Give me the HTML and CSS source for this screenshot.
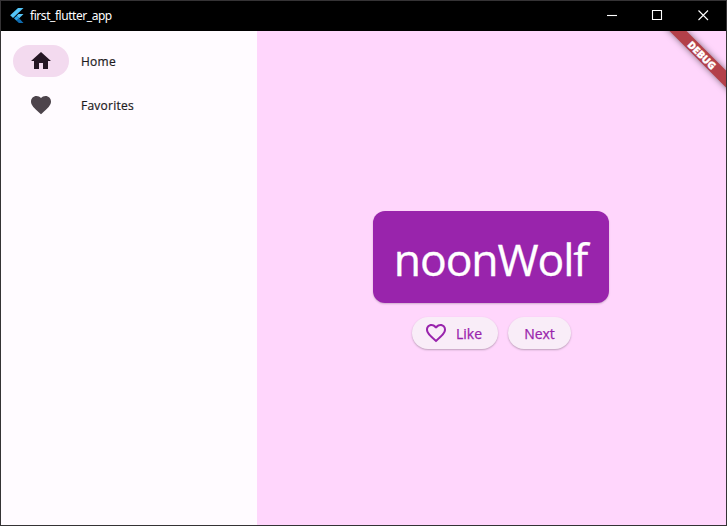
FILE: index.html
```
<!DOCTYPE html>
<html lang="en">
<head>
<meta charset="utf-8">
<title>first_flutter_app</title>
<link rel="stylesheet" href="styles.css">
</head>
<body>
<div class="window">
  <header class="titlebar">
    <svg class="logo" viewBox="0 0 16 16">
      <path d="M9 1h5.500L4 11 1.200 8.300z" fill="#54c5f8"/>
      <path d="M9.500 7h5l-4.300 4.200L7.500 9z" fill="#54c5f8"/>
      <path d="M5 11.200 7.500 8.900l2.700 2.300-2.700 2.500z" fill="#29a5ea"/>
      <path d="M7.500 13.700l2.700-2.500L14.500 16h-4.600z" fill="#0f6cb0"/>
    </svg>
    <span class="title">first_flutter_app</span>
    <div class="controls">
      <svg viewBox="0 0 46 30"><path d="M16 14.500h10"/></svg>
      <svg viewBox="0 0 46 30"><path d="M15.500 9.500h9v9h-9z"/></svg>
      <svg viewBox="0 0 46 30"><path d="M15.500 9.500l9.500 9.500M25 9.500l-9.500 9.500"/></svg>
    </div>
  </header>
  <div class="content">
    <nav class="rail">
      <a class="item selected">
        <span class="indicator"><svg viewBox="0 0 24 24"><path d="M10 20v-6h4v6h5v-8h3L12 3 2 12h3v8z"/></svg></span>
        <span class="label">Home</span>
      </a>
      <a class="item">
        <span class="indicator"><svg viewBox="0 0 24 24"><path d="M12 21.350l-1.450-1.320C5.400 15.360 2 12.280 2 8.500 2 5.420 4.420 3 7.500 3c1.740 0 3.410.81 4.500 2.090C13.090 3.810 14.760 3 16.500 3 19.580 3 22 5.420 22 8.500c0 3.780-3.400 6.860-8.550 11.540L12 21.350z"/></svg></span>
        <span class="label">Favorites</span>
      </a>
    </nav>
    <main class="page">
      <div class="card"><span class="word">noonWolf</span></div>
      <div class="actions">
        <button class="btn like">
          <svg viewBox="0 0 24 24"><path d="M16.500 3c-1.740 0-3.410.81-4.500 2.090C10.910 3.810 9.240 3 7.500 3 4.420 3 2 5.420 2 8.500c0 3.780 3.400 6.860 8.550 11.540L12 21.350l1.450-1.320C18.600 15.360 22 12.280 22 8.500 22 5.420 19.580 3 16.500 3zm-4.400 15.550l-.1.100-.1-.1C7.140 14.240 4 11.390 4 8.500 4 6.500 5.500 5 7.500 5c1.540 0 3.040.99 3.570 2.360h1.870C13.460 5.990 14.960 5 16.500 5c2 0 3.500 1.500 3.500 3.500 0 2.890-3.140 5.740-7.900 10.050z"/></svg>
          <span class="btn-label">Like</span>
        </button>
        <button class="btn next"><span class="btn-label">Next</span></button>
      </div>
      <div class="banner"><span>DEBUG</span></div>
    </main>
  </div>
</div>
</body>
</html>
```
FILE: styles.css
```
* { box-sizing: border-box; }
body { margin: 0; font-family: "Open Sans", "Noto Sans", sans-serif; }
.window {
  width: 727px;
  height: 526px;
  border: 1px solid #353335;
  display: flex;
  flex-direction: column;
  overflow: hidden;
}
.titlebar {
  height: 30px;
  flex: none;
  background: #000;
  color: #fff;
  display: flex;
  align-items: center;
  padding-left: 8px;
}
.logo { width: 16px; height: 16px; margin-top: -2px; }
.title {
  font-family: "Noto Sans", sans-serif;
  font-size: 12px;
  line-height: 16px;
  letter-spacing: -0.45px;
  margin-left: 5px;
  white-space: nowrap;
}
.controls { margin-left: auto; display: flex; margin-right: -3px; }
.controls svg {
  width: 46px;
  height: 30px;
  fill: none;
  stroke: #fff;
  stroke-width: 1.1;
}
.content { flex: 1; display: flex; min-height: 0; }
.rail {
  width: 256px;
  background: #fffbff;
  padding: 14px 12px;
  display: flex;
  flex-direction: column;
  gap: 12px;
}
.item { display: flex; align-items: center; height: 32px; color: #4d444c; }
.indicator {
  width: 56px;
  height: 32px;
  border-radius: 16px;
  display: flex;
  align-items: center;
  justify-content: center;
}
.indicator svg { width: 24px; height: 24px; fill: currentColor; }
.selected .indicator { background: #f3daef; color: #251624; }
.label {
  margin-left: 12px;
  font-size: 12px;
  line-height: 16px;
  letter-spacing: 0.25px;
  color: #1e1a1d;
  -webkit-text-stroke: 0.2px currentColor;
  margin-top: 2px;
}
.page {
  flex: 1;
  background: #ffd6fc;
  position: relative;
  overflow: hidden;
  display: flex;
  flex-direction: column;
  align-items: center;
  padding-top: 180px;
}
.card {
  width: 236px;
  height: 92px;
  margin-right: 1px;
  border-radius: 12px;
  background: #9924ac;
  box-shadow: 0 1px 2px rgba(0, 0, 0, 0.2);
  display: flex;
  align-items: center;
  justify-content: center;
}
.word {
  color: #fff;
  font-size: 44.500px;
  line-height: 52px;
  letter-spacing: -1.1px;
  -webkit-text-stroke: 0.3px currentColor;
  margin-top: 3px;
  margin-right: 1px;
}
.actions { display: flex; gap: 10px; margin-top: 14px; }
.btn {
  height: 32px;
  border: 0;
  border-radius: 16px;
  background: #f9edf8;
  color: #9924ac;
  box-shadow: 0 1px 2px rgba(0, 0, 0, 0.26);
  font-family: inherit;
  display: flex;
  align-items: center;
  padding: 0;
}
.btn svg { width: 24px; height: 24px; fill: currentColor; margin: 0 8px 0 12px; }
.btn-label {
  font-size: 14px;
  line-height: 20px;
  -webkit-text-stroke: 0.25px currentColor;
  margin-top: 2px;
}
.like { width: 86px; }
.next { width: 63px; justify-content: center; }
.banner {
  position: absolute;
  left: 385px;
  top: 18px;
  width: 120px;
  height: 12px;
  background: #b34049;
  box-shadow: 0 0 6px rgba(0, 0, 0, 0.5);
  transform: rotate(45deg);
  color: #fff;
  font-size: 10.200px;
  font-weight: 800;
  line-height: 12px;
  text-align: center;
  -webkit-text-stroke: 0.3px currentColor;
}
```
